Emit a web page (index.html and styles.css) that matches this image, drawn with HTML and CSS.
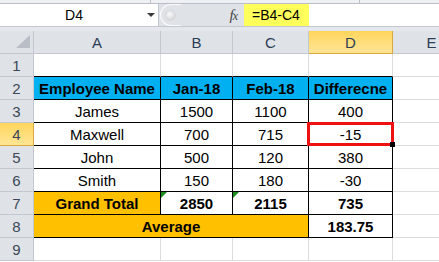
FILE: index.html
```html
<!DOCTYPE html>
<html lang="en">
<head>
    <meta charset="UTF-8">
    <meta name="viewport" content="width=device-width, initial-scale=1.0">
    <title>Employee Difference</title>
    <link rel="stylesheet" href="styles.css">
</head>
<body>
    <div class="top-strip"></div>

    <!-- name box + formula bar -->
    <div class="formula-bar">
        <div class="name-box">
            <span class="cell-ref">D4</span>
            <span class="drop"></span>
        </div>
        <div class="bar-mid">
            <span class="grip"><span class="knob"></span></span>
            <span class="fx"><i>f</i><i class="fx-x">x</i></span>
        </div>
        <div class="formula">
            <span class="formula-text">=B4-C4</span>
        </div>
    </div>
    <div class="bar-gap"></div>

    <table class="sheet">
        <thead>
            <tr>
                <th class="corner"><span class="select-all"></span></th>
                <th class="col-head w-a">A</th>
                <th class="col-head w-b">B</th>
                <th class="col-head w-c">C</th>
                <th class="col-head w-d active">D</th>
                <th class="col-head w-e">E</th>
            </tr>
        </thead>
        <tbody>
            <tr>
                <td class="row-head">1</td>
                <td class="grid edge"></td>
                <td class="grid edge"></td>
                <td class="grid edge"></td>
                <td class="grid edge"></td>
                <td class="grid"></td>
            </tr>
            <tr>
                <td class="row-head">2</td>
                <td class="data blue bold">Employee Name</td>
                <td class="data blue bold">Jan-18</td>
                <td class="data blue bold">Feb-18</td>
                <td class="data blue bold">Differecne</td>
                <td class="grid"></td>
            </tr>
            <tr>
                <td class="row-head">3</td>
                <td class="data">James</td>
                <td class="data">1500</td>
                <td class="data">1100</td>
                <td class="data">400</td>
                <td class="grid"></td>
            </tr>
            <tr>
                <td class="row-head active">4</td>
                <td class="data">Maxwell</td>
                <td class="data">700</td>
                <td class="data">715</td>
                <td class="data selected">-15</td>
                <td class="grid"></td>
            </tr>
            <tr>
                <td class="row-head">5</td>
                <td class="data">John</td>
                <td class="data">500</td>
                <td class="data">120</td>
                <td class="data">380</td>
                <td class="grid"></td>
            </tr>
            <tr>
                <td class="row-head">6</td>
                <td class="data">Smith</td>
                <td class="data">150</td>
                <td class="data">180</td>
                <td class="data">-30</td>
                <td class="grid"></td>
            </tr>
            <tr>
                <td class="row-head">7</td>
                <td class="data orange bold">Grand Total</td>
                <td class="data bold flagged">2850</td>
                <td class="data bold flagged">2115</td>
                <td class="data bold">735</td>
                <td class="grid"></td>
            </tr>
            <tr>
                <td class="row-head">8</td>
                <td class="data orange bold" colspan="3">Average</td>
                <td class="data bold">183.75</td>
                <td class="grid"></td>
            </tr>
            <tr>
                <td class="row-head">9</td>
                <td class="grid"></td>
                <td class="grid"></td>
                <td class="grid"></td>
                <td class="grid"></td>
                <td class="grid"></td>
            </tr>
        </tbody>
    </table>
</body>
</html>
```

FILE: styles.css
```css
body {
    margin: 0;
    width: 439px;
    height: 262px;
    overflow: hidden;
    background-color: #fff;
    font-family: "Liberation Sans", Arial, sans-serif;
    color: #000;
}

/* ribbon edge above the formula bar */
.top-strip {
    height: 3px;
    border-bottom: 1px solid #b9c0c9;
    background:
        linear-gradient(#b9c0c9, #b9c0c9) 150px 0 / 1px 100% no-repeat,
        linear-gradient(#b9c0c9, #b9c0c9) 359px 0 / 1px 100% no-repeat,
        #eef0f3;
}

.formula-bar {
    display: flex;
    height: 22px;
    border-bottom: 1px solid #c3c8d0;
    background-color: #dfe3e8;
    font-size: 14px;
}

.name-box {
    display: flex;
    align-items: center;
    width: 158px;
    background-color: #fff;
    border-right: 1px solid #c3c8d0;
}

.cell-ref {
    flex: 1;
    text-align: center;
    padding-left: 1px;
}

.drop {
    width: 0;
    height: 0;
    margin-right: 3px;
    border-left: 4px solid transparent;
    border-right: 4px solid transparent;
    border-top: 4px solid #3a3a3a;
}

.bar-mid {
    display: flex;
    align-items: center;
    width: 85px;
}

.grip {
    display: flex;
    align-items: center;
    width: 20px;
    height: 20px;
    margin-left: 1px;
    border: 1px solid #fbfbfc;
    border-right: none;
    border-radius: 11px 0 0 11px;
}

.knob {
    width: 9px;
    height: 9px;
    margin-left: 4px;
    border-radius: 50%;
    background: radial-gradient(circle at 40% 35%, #fafafa, #c9ccd1);
    border: 1px solid #d5d8dc;
}

.fx {
    margin-left: auto;
    margin-right: 6px;
    font-family: "Liberation Serif", serif;
    font-size: 15px;
    color: #444;
}

.fx-x {
    font-size: 12px;
    margin-left: -1px;
}

.formula {
    flex: 1;
    display: flex;
    background-color: #fff;
}

.formula-text {
    padding: 0 9px 0 8px;
    line-height: 22px;
    background-color: #ffff5c;
}

.bar-gap {
    height: 4px;
    background-color: #e4e7eb;
}

/* worksheet grid */
.sheet {
    width: 471px;
    table-layout: fixed;
    border-collapse: separate;
    border-spacing: 0;
    font-size: 15px;
}

.sheet th,
.sheet td {
    box-sizing: border-box;
    height: 23px;
    padding: 0;
    text-align: center;
    vertical-align: middle;
    font-weight: normal;
}

.sheet .corner {
    width: 34px;
    background-color: #dfe3e8;
    border-right: 1px solid #c3c8d0;
    border-bottom: 1px solid #c3c8d0;
    line-height: 0;
    text-align: right;
    vertical-align: bottom;
}

.select-all {
    display: inline-block;
    margin: 0 3px 5px 0;
    border-left: 14px solid transparent;
    border-bottom: 13px solid #b9bec6;
}

.col-head {
    background-color: #dfe3e8;
    color: #2c3e55;
    border-right: 1px solid #c3c8d0;
    border-bottom: 1px solid #c3c8d0;
}

.w-a { width: 127px; }
.w-b { width: 72px; }
.w-c { width: 76px; }
.w-d { width: 84px; }
.w-e { width: 78px; }

.row-head {
    background-color: #dfe3e8;
    color: #3b4756;
    border-right: 1px solid #c3c8d0;
    border-bottom: 1px solid #c3c8d0;
}

.sheet .active {
    background: linear-gradient(#ffd55c, #ffe596);
    border-right-color: #d9a93f;
    border-bottom-color: #d9a93f;
}

.grid {
    border-right: 1px solid #dadcdd;
    border-bottom: 1px solid #dadcdd;
}

.grid.edge {
    border-bottom-color: #000;
}

.data {
    border-right: 1px solid #000;
    border-bottom: 1px solid #000;
}

.sheet .bold {
    font-weight: bold;
}

.blue {
    background-color: #00b0f0;
}

.orange {
    background-color: #ffc000;
}

/* green error marker in the corner */
.flagged {
    position: relative;
}

.flagged::before {
    content: "";
    position: absolute;
    left: 0;
    top: 0;
    border-top: 6px solid #1e8a1e;
    border-right: 6px solid transparent;
}

.selected {
    position: relative;
}

.selected::after {
    content: "";
    position: absolute;
    left: -2px;
    top: -1px;
    width: 87px;
    height: 24px;
    box-sizing: border-box;
    border: 3px solid #ee1111;
}

.selected::before {
    content: "";
    position: absolute;
    left: 81px;
    top: 19px;
    width: 5px;
    height: 5px;
    background-color: #000;
    z-index: 1;
}
```
